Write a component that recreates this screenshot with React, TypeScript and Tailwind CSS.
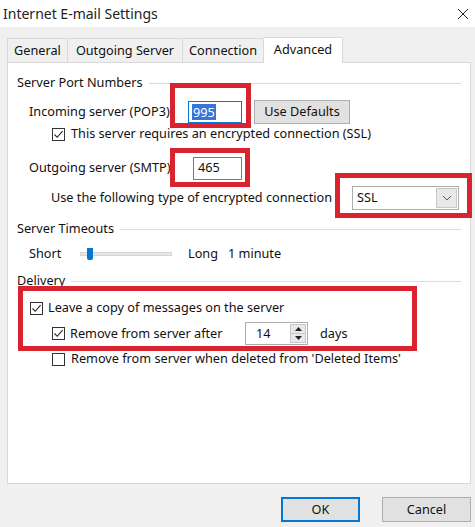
import React from "react";

const Check = ({ checked }: { checked: boolean }) => (
  <div className="w-[13px] h-[13px] border border-[#333] bg-white flex items-center justify-center shrink-0">
    {checked && (
      <svg width="11" height="11" viewBox="0 0 11 11">
        <path d="M1.5 5.5 L4.2 8.3 L9.6 2.2" fill="none" stroke="#222" strokeWidth="1.1" />
      </svg>
    )}
  </div>
);

const GroupLabel = ({ text, mt }: { text: string; mt: string }) => (
  <div className={`flex items-center h-[16px] ${mt}`}>
    <span className="pl-[9px] pr-[6px]">{text}</span>
    <div className="flex-1 h-px bg-[#dcdcdc] mr-[9px]" />
  </div>
);

export default function App() {
  return (
    <div
      className="relative w-[475px] h-[527px] bg-[#f0f0f0] overflow-hidden text-[12.7px] text-[#111]"
      style={{ fontFamily: '"Segoe UI", "Noto Sans", sans-serif' }}
    >
      {/* Title bar */}
      <div className="h-[27px] bg-white flex items-center justify-between pl-[3px] pr-[6px]">
        <span className="text-[14px] text-[#222]">Internet E-mail Settings</span>
        <svg width="12" height="12" viewBox="0 0 12 12">
          <path d="M1 1 L11 11 M11 1 L1 11" stroke="#222" strokeWidth="1" />
        </svg>
      </div>

      {/* Tabs */}
      <div className="pl-[7px] pt-[10px] flex items-end h-[35px]">
        <div className="w-[61px] h-[24px] border border-[#d9d9d9] border-b-0 flex items-center justify-center bg-[#f0f0f0]">General</div>
        <div className="w-[115px] h-[24px] border border-[#d9d9d9] border-l-0 border-b-0 flex items-center justify-center bg-[#f0f0f0]">Outgoing Server</div>
        <div className="w-[81px] h-[24px] border border-[#d9d9d9] border-l-0 border-b-0 flex items-center justify-center bg-[#f0f0f0]">Connection</div>
        <div className="w-[79px] h-[26px] border border-[#d9d9d9] border-l-0 border-b-0 bg-white flex items-start justify-center pt-[2px] -mb-px relative z-10">Advanced</div>
      </div>

      {/* Panel */}
      <div className="ml-[7px] w-[464px] h-[422px] border border-[#d9d9d9] bg-white flex flex-col">
        <GroupLabel text="Server Port Numbers" mt="mt-[12px]" />
        <div className="flex items-center h-[26px] mt-[8px] pl-[21px]">
          <span className="w-[159px]">Incoming server (POP3)</span>
          <div className="w-[54px] h-[22px] border border-[#0078d7] flex items-center pl-[3px]">
            <span className="bg-[#3875d7] text-white px-px leading-[16px]">995</span>
          </div>
          <div className="ml-[12px] w-[96px] h-[24px] border border-[#adadad] bg-[#e1e1e1] flex items-center justify-center">Use Defaults</div>
        </div>
        <div className="flex items-center h-[16px] mt-[1px] pl-[44px] gap-[6px]">
          <Check checked />
          <span>This server requires an encrypted connection (SSL)</span>
        </div>
        <div className="flex items-center h-[24px] mt-[14px] pl-[21px]">
          <span className="w-[164px]">Outgoing server (SMTP):</span>
          <div className="w-[49px] h-[23px] border border-[#7a7a7a] flex items-center pl-[4px]">465</div>
        </div>
        <div className="flex items-center h-[24px] mt-[6px] pl-[43px]">
          <span className="w-[301px]">Use the following type of encrypted connection</span>
          <div className="w-[107px] h-[24px] border border-[#adadad] bg-white flex items-center justify-between pl-[4px] pr-px">
            <span>SSL</span>
            <div className="w-[21px] h-[20px] border border-[#c8c8c8] bg-[#e8e8e8] flex items-center justify-center">
              <svg width="10" height="6" viewBox="0 0 10 6">
                <path d="M1 1 L5 5 L9 1" fill="none" stroke="#555" strokeWidth="1" />
              </svg>
            </div>
          </div>
        </div>
        <GroupLabel text="Server Timeouts" mt="mt-[11px]" />
        <div className="flex items-center h-[16px] mt-[9px] pl-[21px]">
          <span className="w-[51px]">Short</span>
          <div className="relative w-[92px] h-[4px] bg-[#e7e7e7] border border-[#d6d6d6]">
            <div className="absolute left-[6px] -top-[5px] w-[6px] h-[12px] bg-[#0078d7] rounded-b-[2px]" />
          </div>
          <span className="ml-[16px]">Long</span>
          <span className="ml-[10px]">1 minute</span>
        </div>
        <GroupLabel text="Delivery" mt="mt-[11px]" />
        <div className="flex items-center h-[16px] mt-[11px] pl-[22px] gap-[5px]">
          <Check checked />
          <span>Leave a copy of messages on the server</span>
        </div>
        <div className="flex items-center h-[23px] mt-[6px] pl-[44px]">
          <Check checked />
          <span className="ml-[5px] w-[175px]">Remove from server after</span>
          <div className="w-[63px] h-[23px] border border-[#adadad] flex items-center justify-between pl-[10px] pr-px">
            <span>14</span>
            <div className="w-[16px] h-[19px] flex flex-col border border-[#c8c8c8] bg-[#e8e8e8]">
              <div className="flex-1 flex items-center justify-center border-b border-[#c8c8c8]">
                <svg width="7" height="4" viewBox="0 0 7 4"><path d="M0 4 L3.5 0 L7 4 Z" fill="#222" /></svg>
              </div>
              <div className="flex-1 flex items-center justify-center">
                <svg width="7" height="4" viewBox="0 0 7 4"><path d="M0 0 L3.5 4 L7 0 Z" fill="#222" /></svg>
              </div>
            </div>
          </div>
          <span className="ml-[12px]">days</span>
        </div>
        <div className="flex items-center h-[16px] mt-[6px] pl-[44px] gap-[6px]">
          <Check checked={false} />
          <span>Remove from server when deleted from 'Deleted Items'</span>
        </div>
      </div>

      {/* Buttons */}
      <div className="flex justify-end gap-[22px] pr-[4px] mt-[13px]">
        <div className="w-[79px] h-[25px] border-2 border-[#0078d7] bg-[#e1e1e1] flex items-center justify-center">OK</div>
        <div className="w-[89px] h-[25px] border border-[#adadad] bg-[#e1e1e1] flex items-center justify-center">Cancel</div>
      </div>

      {/* Red annotation boxes */}
      <div className="absolute left-[170px] top-[83px] w-[81px] h-[45px] border-[5px] border-[#d9232e]" />
      <div className="absolute left-[170px] top-[148px] w-[80px] h-[39px] border-[5px] border-[#d9232e]" />
      <div className="absolute left-[335px] top-[173px] w-[137px] h-[45px] border-[5px] border-[#d9232e]" />
      <div className="absolute left-[18px] top-[286px] w-[399px] h-[65px] border-[5px] border-[#d9232e]" />
    </div>
  );
}
